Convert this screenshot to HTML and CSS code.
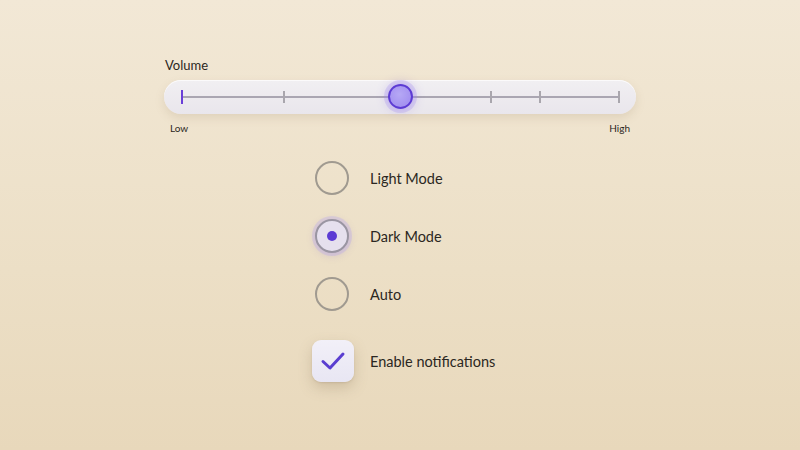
FILE: index.html
```html
<!DOCTYPE html>
<html lang="en">
<head>
    <meta charset="UTF-8">
    <meta name="viewport" content="width=device-width, initial-scale=1.0">
    <title>Settings</title>
    <link rel="stylesheet" href="styles.css">
</head>
<body>
    <div class="container">
        <div class="volume">
            <div class="volume-label">Volume</div>
            <div class="slider">
                <div class="track">
                    <span class="tick tick-start" style="left: 0px"></span>
                    <span class="tick" style="left: 102px"></span>
                    <span class="tick" style="left: 309px"></span>
                    <span class="tick" style="left: 358px"></span>
                    <span class="tick" style="left: 437px"></span>
                    <span class="thumb" style="left: 219px"></span>
                </div>
            </div>
            <div class="range-labels">
                <span>Low</span>
                <span>High</span>
            </div>
        </div>

        <div class="options">
            <div class="option">
                <div class="control"><span class="radio"></span></div>
                <span class="option-text">Light Mode</span>
            </div>
            <div class="option">
                <div class="control"><span class="radio checked"><span class="dot"></span></span></div>
                <span class="option-text">Dark Mode</span>
            </div>
            <div class="option">
                <div class="control"><span class="radio"></span></div>
                <span class="option-text">Auto</span>
            </div>
            <div class="option option-check">
                <div class="control">
                    <span class="checkbox">
                        <svg width="26" height="22" viewBox="0 0 26 22">
                            <path d="M3 11.5 L10 18 L23 4" fill="none" stroke="#5a3ed0" stroke-width="3" stroke-linecap="round" stroke-linejoin="round"/>
                        </svg>
                    </span>
                </div>
                <span class="option-text">Enable notifications</span>
            </div>
        </div>
    </div>
</body>
</html>
```

FILE: styles.css
```css
body {
    margin: 0;
    height: 450px;
    font-family: Lato, "Noto Sans", sans-serif;
    color: #2b2722;
    background: linear-gradient(180deg, #f2e8d6 0%, #ecdfc6 60%, #e8d8bb 100%);
    overflow: hidden;
}
.container {
    width: 472px;
    margin: 0 auto;
    padding-top: 57px;
}
.volume-label {
    font-size: 13px;
    line-height: 16px;
    padding-left: 1px;
    margin-bottom: 7px;
}
.slider {
    height: 34px;
    border-radius: 17px;
    background: linear-gradient(180deg, #f1eff2 0%, #e9e6ec 100%);
    box-shadow: 0 4px 10px rgba(150, 130, 100, 0.18), inset 0 1px 0 rgba(255, 255, 255, 0.7);
    display: flex;
    align-items: center;
    padding: 0 17px 0 17px;
}
.track {
    position: relative;
    flex: 1;
    height: 2px;
    background: #aaa6b2;
}
.tick {
    position: absolute;
    top: -5px;
    width: 1.5px;
    height: 12px;
    background: #a9a6ad;
}
.tick-start {
    width: 2px;
    top: -6px;
    height: 14px;
    background: #6a3fd8;
}
.thumb {
    position: absolute;
    top: -12px;
    width: 21px;
    height: 21px;
    margin-left: -12px;
    border-radius: 50%;
    border: 2.5px solid #5c3bd4;
    background: radial-gradient(circle at 45% 40%, #b6a8f5 0%, #9c88ee 100%);
    box-shadow: 0 0 0 4px rgba(160, 135, 240, 0.25), 0 0 12px rgba(130, 100, 230, 0.45);
}
.range-labels {
    display: flex;
    justify-content: space-between;
    font-size: 10px;
    line-height: 12px;
    margin-top: 8px;
    padding: 0 6px 0 6px;
}
.options {
    display: flex;
    flex-direction: column;
    gap: 16px;
    margin-top: 23px;
    padding-left: 148px;
}
.option {
    display: flex;
    align-items: center;
    gap: 16px;
    height: 42px;
}
.option-check {
    margin-top: 9px;
}
.control {
    width: 42px;
    display: flex;
    justify-content: center;
}
.radio {
    width: 30px;
    height: 30px;
    border-radius: 50%;
    border: 2.5px solid #a09a90;
    display: flex;
    align-items: center;
    justify-content: center;
    margin-left: -2px;
}
.radio.checked {
    border-color: #9a95a2;
    background: #e6e0ee;
    box-shadow: 0 0 0 3px rgba(185, 170, 235, 0.35), 0 2px 8px rgba(140, 120, 200, 0.3);
}
.dot {
    width: 10px;
    height: 10px;
    border-radius: 50%;
    background: #5c3bd4;
}
.checkbox {
    width: 42px;
    height: 42px;
    border-radius: 9px;
    background: linear-gradient(180deg, #f2f0f8 0%, #e8e6f3 100%);
    box-shadow: 0 6px 14px rgba(140, 120, 90, 0.28), 0 1px 2px rgba(140, 120, 90, 0.2);
    display: flex;
    align-items: center;
    justify-content: center;
}
.option-text {
    font-size: 14.5px;
}
```
